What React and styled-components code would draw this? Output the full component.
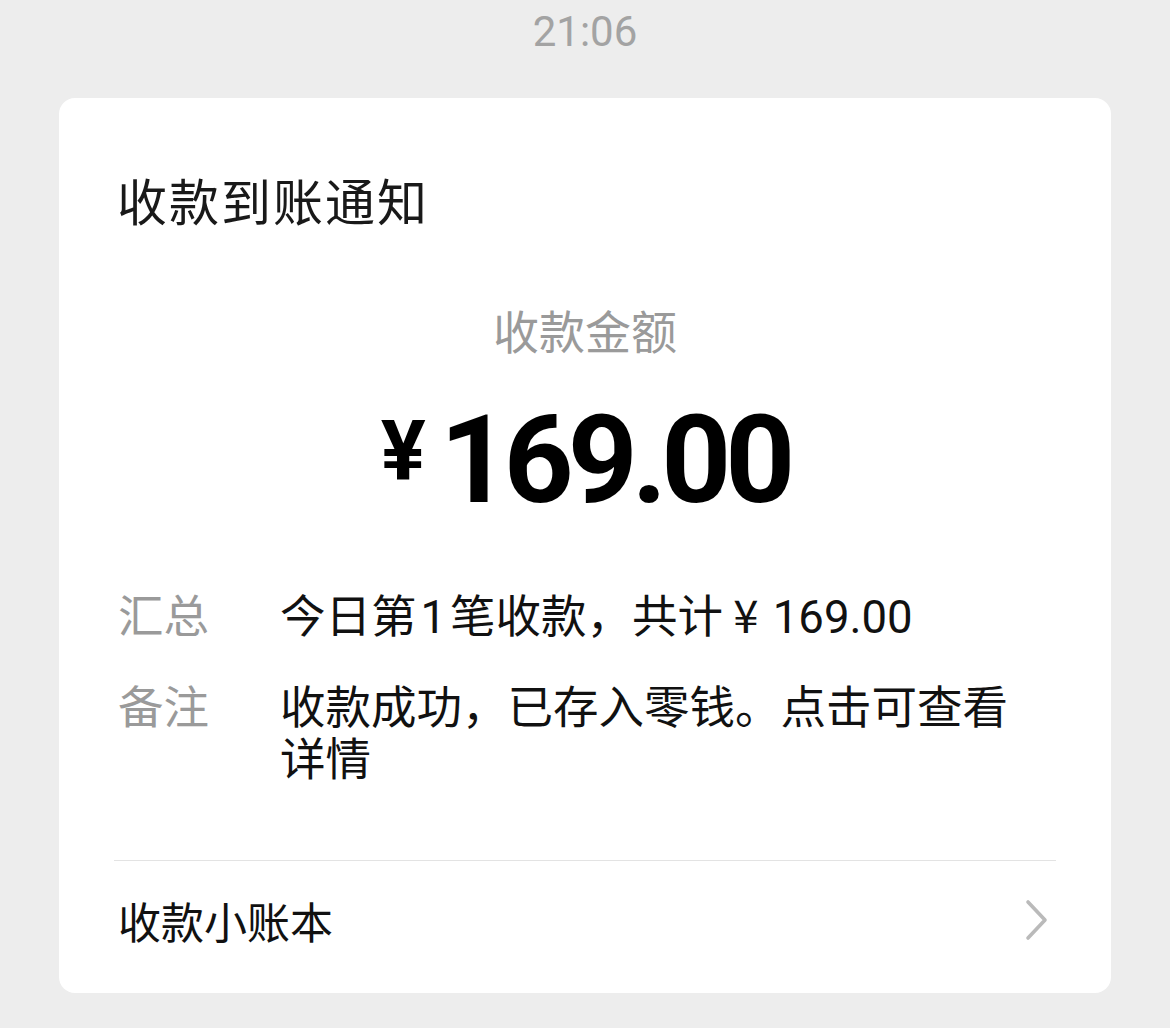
import styled, { createGlobalStyle } from 'styled-components';

const GlobalStyles = createGlobalStyle`
	html, body {
		margin: 0;
		padding: 0;
		background: #ededed;
	}
	body {
		font-family: "Noto Sans CJK SC", "Noto Sans", sans-serif;
		min-height: 1028px;
	}
`;

const Page = styled.div`
	padding: 10px 59px 0;
	display: flex;
	flex-direction: column;
	align-items: stretch;
`;

const Time = styled.div`
	text-align: center;
	font-family: Roboto, "Noto Sans", sans-serif;
	font-size: 42px;
	line-height: 44px;
	color: #a3a3a3;
	margin-bottom: 44px;
`;

const Card = styled.div`
	background: #fff;
	border-radius: 16px;
	padding: 71px 57px 43px;
`;

const Title = styled.div`
	font-size: 50px;
	line-height: 60px;
	letter-spacing: 2px;
	color: #191919;
	padding-left: 1px;
`;

const AmountLabel = styled.div`
	margin-top: 70px;
	text-align: center;
	font-size: 46px;
	line-height: 60px;
	color: #9a9a9a;
`;

const Amount = styled.div`
	margin-top: 33px;
	display: flex;
	justify-content: center;
	align-items: flex-start;
	height: 130px;
	color: #000;
	font-family: Roboto, "Noto Sans", sans-serif;
	font-weight: 700;
`;

const Currency = styled.span`
	font-size: 84px;
	line-height: 1;
	margin-top: 18px;
	margin-right: 14px;
`;

const Digits = styled.span`
	font-size: 122px;
	line-height: 130px;
	letter-spacing: -6px;
	margin-top: 4px;
`;

const Details = styled.div`
	margin-top: 65px;
	display: flex;
	flex-direction: column;
	gap: 34px;
`;

const Row = styled.div`
	display: grid;
	grid-template-columns: 164px 1fr;
	padding-right: 20px;
	font-size: 45.5px;
	line-height: 52px;
`;

const Label = styled.span`
	color: #9a9a9a;
	padding-left: 2px;
`;

const Value = styled.span`
	color: #111;
`;

const Num = styled.span`
	font-family: Roboto, "Noto Sans", sans-serif;
	margin: ${(props) => (props.$tight ? '0 4px' : '0 0 0 4px')};
`;

const Divider = styled.hr`
	margin: 78px -2px 0;
	border: none;
	border-top: 1px solid #e3e3e3;
`;

const Footer = styled.div`
	margin-top: 29px;
	display: flex;
	align-items: center;
	justify-content: space-between;
	font-size: 43px;
	line-height: 60px;
	color: #111;
	padding-left: 2px;
`;

const Chevron = () => (
	<svg width="26" height="44" viewBox="0 0 26 44" fill="none" style={{ marginRight: '4px' }}>
		<path d="M4 4 L21 22 L4 40" stroke="#bababa" strokeWidth="3.6" strokeLinecap="round" strokeLinejoin="round" />
	</svg>
);

function App() {
	return (
		<>
			<GlobalStyles />
			<Page>
				<Time>21:06</Time>
				<Card>
					<Title>收款到账通知</Title>
					<AmountLabel>收款金额</AmountLabel>
					<Amount>
						<Currency>¥</Currency>
						<Digits>169.00</Digits>
					</Amount>
					<Details>
						<Row>
							<Label>汇总</Label>
							<Value>今日第<Num $tight>1</Num>笔收款，共计 ¥ <Num>169.00</Num></Value>
						</Row>
						<Row>
							<Label>备注</Label>
							<Value>收款成功，已存入零钱。点击可查看详情</Value>
						</Row>
					</Details>
					<Divider />
					<Footer>
						<span>收款小账本</span>
						<Chevron />
					</Footer>
				</Card>
			</Page>
		</>
	);
}

export default App;
